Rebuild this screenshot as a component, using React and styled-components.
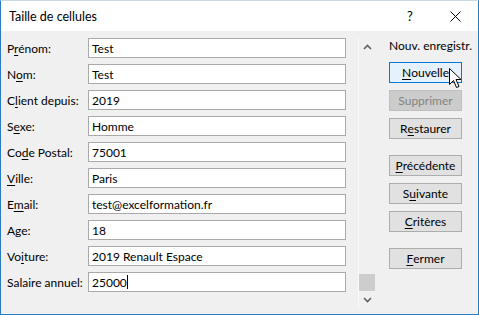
import React from "react";
import styled, { createGlobalStyle } from "styled-components";

const GlobalStyle = createGlobalStyle`
    html, body {
        margin: 0;
        padding: 0;
        background: #ffffff;
    }
    body {
        font-family: Lato, "Liberation Sans", sans-serif;
        font-size: 12px;
        color: #000000;
    }
`

const Window = styled.div`
    display: flex;
    flex-direction: column;
    width: 479px;
    height: 315px;
    box-sizing: border-box;
    border: 1px solid #2b7bc4;
    border-top-color: #c9d9e8;
    background-color: #ffffff;
    position: relative;
    overflow: hidden;
`

const TitleBar = styled.div`
    display: flex;
    align-items: center;
    height: 30px;
    flex-shrink: 0;
    padding-left: 8px;
    background-color: #ffffff;
`

const Title = styled.div`
    flex: 1;
    font-size: 12.5px;
`

const TitleButton = styled.div`
    display: flex;
    align-items: center;
    justify-content: center;
    width: ${(p) => p.$w}px;
    height: 30px;
    font-size: 13px;
`

const Body = styled.div`
    flex: 1;
    display: flex;
    background-color: #f0f0f0;
    padding-top: 7px;
`

const Fields = styled.div`
    display: flex;
    flex-direction: column;
    gap: 6px;
    padding-left: 6px;
`

const Row = styled.div`
    display: flex;
    align-items: center;
    height: 20px;
`

const Label = styled.div`
    width: 81px;
    white-space: nowrap;
`

const Input = styled.div`
    display: flex;
    align-items: center;
    width: 258px;
    height: 20px;
    box-sizing: border-box;
    padding-left: 3px;
    background-color: #ffffff;
    border: 1px solid #a9a9a9;
    white-space: nowrap;
`

const Caret = styled.span`
    display: inline-block;
    width: 1px;
    height: 14px;
    background-color: #000000;
`

const ScrollBar = styled.div`
    display: flex;
    flex-direction: column;
    justify-content: space-between;
    width: 17px;
    height: 270px;
    margin-left: 12px;
    border-left: 1px solid #fafafa;
    background-color: #f0f0f0;
`

const Arrow = styled.div`
    display: flex;
    align-items: center;
    justify-content: center;
    height: 17px;
`

const Thumb = styled.div`
    height: 17px;
    width: 16px;
    background-color: #cdcdcd;
`

const ThumbArea = styled.div`
    flex: 1;
    display: flex;
    flex-direction: column;
    justify-content: flex-end;
`

const Side = styled.div`
    display: flex;
    flex-direction: column;
    margin-left: 13px;
`

const Counter = styled.div`
    height: 16px;
    line-height: 16px;
    margin-bottom: 8px;
    white-space: nowrap;
`

const Group = styled.div`
    display: flex;
    flex-direction: column;
    gap: 7px;
    margin-bottom: ${(p) => p.$after || 0}px;
`

const Button = styled.div`
    display: flex;
    align-items: center;
    justify-content: center;
    width: 73px;
    height: 21px;
    box-sizing: border-box;
    border: 1px solid ${(p) => (p.$focus ? "#0078d7" : p.$disabled ? "#bfbfbf" : "#adadad")};
    background-color: ${(p) => (p.$focus ? "#e5f1fb" : p.$disabled ? "#cccccc" : "#e1e1e1")};
    color: ${(p) => (p.$disabled ? "#838383" : "#000000")};
`

const Pointer = styled.svg`
    position: absolute;
    left: 448px;
    top: 67px;
`

const u = (s) => <span style={{ textDecoration: "underline", textUnderlineOffset: "2px" }}>{s}</span>

const fields = [
    [<>P{u("r")}énom:</>, "Test"],
    [<>N{u("o")}m:</>, "Test"],
    [<>C{u("l")}ient depuis:</>, "2019"],
    [<>S{u("e")}xe:</>, "Homme"],
    [<>Co{u("d")}e Postal:</>, "75001"],
    [<>{u("V")}ille:</>, "Paris"],
    [<>E{u("m")}ail:</>, "test@excelformation.fr"],
    [<>Age:</>, "18"],
    [<>Vo{u("i")}ture:</>, "2019 Renault Espace"],
    [<>Salaire annuel:</>, "25000", true],
]

export default function App() {
    return (
        <>
            <GlobalStyle />
            <Window>
                <TitleBar>
                    <Title>Taille de cellules</Title>
                    <TitleButton $w={44}>?</TitleButton>
                    <TitleButton $w={46}>
                        <svg width="11" height="11" viewBox="0 0 11 11">
                            <path d="M0.5 0.5 L10.5 10.5 M10.5 0.5 L0.5 10.5" stroke="#000" strokeWidth="1" />
                        </svg>
                    </TitleButton>
                </TitleBar>
                <Body>
                    <Fields>
                        {fields.map(([label, value, caret], i) => (
                            <Row key={i}>
                                <Label>{label}</Label>
                                <Input>
                                    {value}
                                    {caret && <Caret />}
                                </Input>
                            </Row>
                        ))}
                    </Fields>
                    <ScrollBar>
                        <Arrow>
                            <svg width="9" height="6" viewBox="0 0 9 6">
                                <path d="M1 5 L4.5 1.5 L8 5" fill="none" stroke="#606060" strokeWidth="1.6" />
                            </svg>
                        </Arrow>
                        <ThumbArea>
                            <Thumb />
                        </ThumbArea>
                        <Arrow>
                            <svg width="9" height="6" viewBox="0 0 9 6">
                                <path d="M1 1 L4.5 4.5 L8 1" fill="none" stroke="#606060" strokeWidth="1.6" />
                            </svg>
                        </Arrow>
                    </ScrollBar>
                    <Side>
                        <Counter>Nouv. enregistr.</Counter>
                        <Group $after={16}>
                            <Button $focus>{u("N")}ouvelle</Button>
                            <Button $disabled>Supprimer</Button>
                            <Button>R{u("e")}staurer</Button>
                        </Group>
                        <Group $after={16}>
                            <Button>{u("P")}récédente</Button>
                            <Button>S{u("u")}ivante</Button>
                            <Button>{u("C")}ritères</Button>
                        </Group>
                        <Group>
                            <Button>{u("F")}ermer</Button>
                        </Group>
                    </Side>
                </Body>
                <Pointer width="13" height="21" viewBox="0 0 13 21">
                    <path d="M0.5 0.5 L0.5 16.5 L4.5 12.5 L7.5 19.5 L10 18.5 L7 11.5 L12 11.5 Z" fill="#fff" stroke="#000" strokeWidth="1" />
                </Pointer>
            </Window>
        </>
    );
}
